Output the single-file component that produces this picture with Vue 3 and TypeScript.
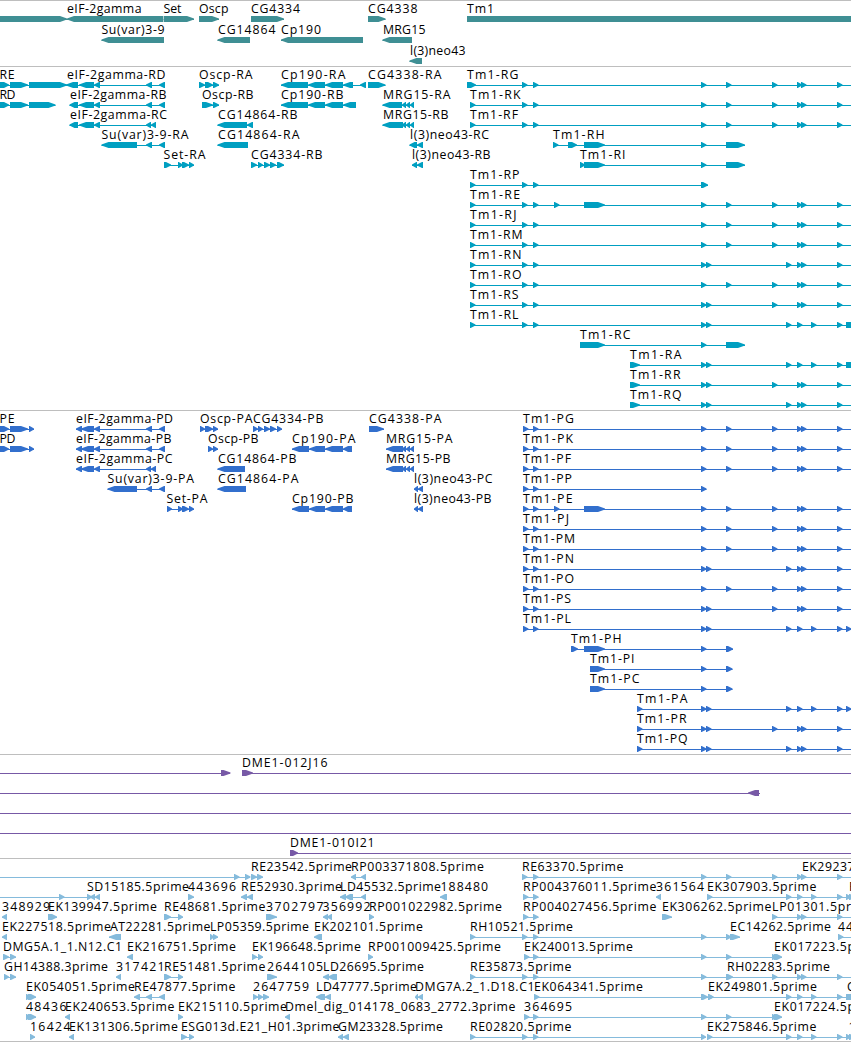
<script setup lang="ts">
interface Label { text: string; x: number; width?: number }
interface Feature { line: [number, number]; shapes: string[] }
interface Row { labels: Label[]; features: Feature[] }
interface Track { kind: string; rowHeight: number; rows: Row[] }

const EDGE = 860

// Exon groups shared by the Tm1 isoforms. A bare number is a minimal-width exon.
const A = '701 726 772 797-802 801 837'
const B = '701 706 786 797-802 801 837'
const C = '701 706 772 797-802 801 837'
const D = '701 706 786 797 811 837'

function arrow(a: number, b: number, forward: boolean): string {
  const w = b - a
  const tip = w > 9 ? 7 : Math.max(0, Math.min(5, w - 0.7))
  return forward
    ? `${a},0 ${b - tip},0 ${b},2.6 ${b},3.4 ${b - tip},6 ${a},6`
    : `${b},0 ${a + tip},0 ${a},2.6 ${a},3.4 ${a + tip},6 ${b},6`
}

// Feature syntax: direction, exon ranges, optional "from~to" for the intron line.
function feature(src: string): Feature {
  const forward = src[0] === '>'
  let line: [number, number] | null = null
  const spans: [number, number][] = []
  for (const part of src.slice(1).trim().split(/\s+/)) {
    if (part.includes('~')) {
      const [a, b] = part.split('~').map(Number)
      line = [a, b]
    } else if (part.includes('-')) {
      const [a, b] = part.split('-').map(Number)
      spans.push([a, b])
    } else {
      spans.push([Number(part), Number(part) + 5.5])
    }
  }
  return {
    line: line ?? [spans[0][0], spans[spans.length - 1][1]],
    shapes: spans.map(([a, b]) => arrow(a, b, forward)),
  }
}

function label(src: string): Label {
  const [text, pos] = src.split('@')
  const [x, end] = pos.split(',').map(Number)
  return { text, x, width: end === undefined ? undefined : end - x }
}

function row(labels: string, features: string): Row {
  return {
    labels: labels ? labels.split(' ').map(label) : [],
    features: features.split(';').map((s) => feature(s.trim())),
  }
}

const cont = `0~${EDGE}`
const tm = (name: string, x: number, end: number, exons: string, open = true): [string, string] => [
  `Tm1-${name}@${x},${end}`,
  `> ${exons}${open ? ` ${x}~${EDGE}` : ''}`,
]
const add = (labels: string, features: string, t: [string, string]): Row =>
  row(labels ? `${labels} ${t[0]}` : t[0], features ? `${features}; ${t[1]}` : t[1])

const R = '470 522 533'
const P = '523 533'

const tracks: Track[] = [
  {
    kind: 'gene',
    rowHeight: 21,
    rows: [
      row('eIF-2gamma@67,141.5 Set@163.5,181.5 Oscp@199,228.5 CG4334@251,300 CG4338@368,417.5 Tm1@467,494',
        `> 0-67; < 67-163.4; > 164-194; > 199-219; > 251-284; > 368-385.5; > 467-${EDGE + 10}`),
      row('Su(var)3-9@101.5,164.5 CG14864@218,275.5 Cp190@281,321 MRG15@383,425.5',
        '< 101.5-164; < 217.5-250; < 281-363; < 382.5-412'),
      row('l(3)neo43@410,465.5', '< 409.5-422'),
    ],
  },
  {
    kind: 'transcript',
    rowHeight: 20,
    rows: [
      add('RE@-0.5,14.5 eIF-2gamma-RD@67,165.5 Oscp-RA@199,252.5 Cp190-RA@281,345.5 CG4338-RA@368,441.5',
        '> 0-9 10-28 29-67; < 66-78 79-94 94-100 146-152 159-165; > 199-205 205-213 213-219; < 281-308 308-325 325-343 343-353 360-366; > 368-385.5',
        tm('RG', 467, 518.5, `467-476 522 533 ${A}`)),
      add('RD@-0.5,15.5 eIF-2gamma-RB@70,166.5 Oscp-RB@202,253.5 Cp190-RB@281,343.5 MRG15-RA@383,450.5',
        '> 0-9 10-28 29-55.5; < 69.5-78 79-94 94-100 146-152 159-165; > 202-213 213-219; < 281-308 308-325 325-343 343-356; < 382.5-402 402-406 406-410 410-414',
        tm('RK', 470, 520.5, `${R} ${A}`)),
      add('eIF-2gamma-RC@70,167 CG14864-RB@218,297.5 MRG15-RB@383,448.5',
        '< 69.5-78 79-94 94-100 146-151 151-156; < 217.5-247 247-253; < 382.5-403 402-406 406-410 410-414',
        tm('RF', 470, 518, `${R} ${A}`)),
      add('Su(var)3-9-RA@101.5,188.5 CG14864-RA@218,299.5 l(3)neo43-RC@410,489',
        '< 101.5-137 146-152 159-165; < 217.5-248; < 409.5-417 417-423',
        tm('RH', 553, 604.5, '553 568-577 584-605 701 726-745', false)),
      add('Set-RA@163.5,205.5 CG4334-RB@251,322.5 l(3)neo43-RB@412,490.5',
        '> 164-171 178-183 182-189 189-194; > 251-257 258-263 264-270 270-276 277-284; < 412-417 417-423',
        tm('RI', 580, 625.5, '580-585 584-605 701 726-745', false)),
      add('', '', tm('RP', 470, 519.5, `${R} 701-708`, false)),
      add('', '', tm('RE', 470, 520, `${R} 554 584-605 ${A}`)),
      add('', '', tm('RJ', 470, 516.5, `${R} ${A}`)),
      add('', '', tm('RM', 470, 522.5, `${R} ${A}`)),
      add('', '', tm('RN', 470, 521.5, `${R} ${B}`)),
      add('', '', tm('RO', 470, 521.5, `${R} ${A}`)),
      add('', '', tm('RS', 470, 518.5, `${R} ${C}`)),
      add('', '', tm('RL', 470, 518.5, `${R} ${D} 846-860`)),
      add('', '', tm('RC', 580, 630.5, '580-605 701 726-745', false)),
      add('', '', tm('RA', 630, 681.5, `630-640 ${D} 846-860`)),
      add('', '', tm('RR', 630, 680.5, `630-640 ${C}`)),
      add('', '', tm('RQ', 630, 681.5, `630-640 ${B}`)),
    ],
  },
  {
    kind: 'protein',
    rowHeight: 20,
    rows: [
      add('PE@-0.5,14.5 eIF-2gamma-PD@76,173 Oscp-PA@200,252.5 CG4334-PB@253,323.5 CG4338-PA@369,441.5',
        '> 0-9 10-28 29-34; < 76-82 81-94 94-100 146-152 159-165; > 200-205 205-213 213-218; > 253-258 258-263 264-270 270-276 277-282; > 369-384',
        tm('PG', 523, 574, `${P} ${A}`)),
      add('PD@-0.5,15.5 eIF-2gamma-PB@76,171.5 Oscp-PB@208,258.5 Cp190-PA@292,355.5 MRG15-PA@386,452.5',
        '> 0-9 10-28 29-34; < 76-82 81-94 94-100 146-152 159-165; > 208-213 213-218; < 292-309 309-325 325-343 343-352; < 386-403 402-406 406-410 410-414',
        tm('PK', 523, 573, `${P} ${A}`)),
      add('eIF-2gamma-PC@76,172.5 CG14864-PB@218,296.5 MRG15-PB@386,450.5',
        '< 76-82 81-94 94-100 146-151 151-156; < 217.5-245; < 386-403 402-406 406-410 410-414',
        tm('PF', 523, 571, `${P} ${A}`)),
      add('Su(var)3-9-PA@107.5,194 CG14864-PA@218,298.5 l(3)neo43-PC@414,492.5',
        '< 107.5-137 146-152 159-165; < 217.5-246; < 414-418 418-423',
        tm('PP', 523, 572, `${P} 701`, false)),
      add('Set-PA@166.5,207.5 Cp190-PB@292,353.5 l(3)neo43-PB@414,491.5',
        '> 167-172 178-183 182-189 189-194; < 292-309 309-325 325-343 343-352; < 414-418 418-423',
        tm('PE', 523, 572.5, `${P} 554 584-605 ${A}`)),
      add('', '', tm('PJ', 523, 569, `${P} ${A}`)),
      add('', '', tm('PM', 523, 575, `${P} ${A}`)),
      add('', '', tm('PN', 523, 574, `${P} ${B}`)),
      add('', '', tm('PO', 523, 574, `${P} ${A}`)),
      add('', '', tm('PS', 523, 571, `${P} ${C}`)),
      add('', '', tm('PL', 523, 571, `${P} ${D} 846`)),
      add('', '', tm('PH', 571, 621.5, '571-578 584-605 701 726-733', false)),
      add('', '', tm('PI', 590, 634.5, '590-605 701 726-732.5', false)),
      add('', '', tm('PC', 590, 639.5, '590-605 701 726-732.5', false)),
      add('', '', tm('PA', 637, 687.5, `637 ${D} 846`)),
      add('', '', tm('PR', 637, 686.5, `637 ${C}`)),
      add('', '', tm('PQ', 637, 687.5, `637 ${B}`)),
    ],
  },
  {
    kind: 'bac',
    rowHeight: 20,
    rows: [
      row('DME1-012J16@242,327.5', `> 221-230.5 0~230; > 242-253 242~${EDGE}`),
      row('', '< 748-759 0~760'),
      row('', `> 860-860 ${cont}`),
      row('', `> 860-860 ${cont}`),
      row('DME1-010I21@290,374.5', `> 290-298 290~${EDGE}`),
    ],
  },
  {
    kind: 'est',
    rowHeight: 20,
    rows: [
      row('RE23542.5prime@251,352 RP003371808.5prime@351,484 RE63370.5prime@522,623.5 EK29237@802,854.5',
        `> 234 245 0~250; > 251-257 257-263; < 351-356 361-366; > 522 533 ${A} 522~${EDGE}`),
      row('SD15185.5prime@87,189 443696@188,236 RE52930.3prime@241,342 LD45532.5prime@340,441 188480@440.5,488 RP004376011.5prime@523,656.5 361564@656,704 EK307903.5prime@707,816.5 R@849',
        `> 59 87-92 0~92; < 90-95 95-100; > 188-194; < 241-247 247-253; < 340-346 345-353 361-366; < 440-447; > 523 533; < 656-661; > 707 786 797 811 837 846-851 849-855 707~${EDGE}`),
      row('348929@2,50 EK139947.5prime@48,157 RE48681.5prime@164,265.5 3702797@266,323.5 356992@322.5,370.5 RP001022982.5prime@369,502 RP004027456.5prime@523,656.5 EK306262.5prime@662,771.5 LP01301.5pr@772,851',
        `< 2-7; > 48-57; > 164-171 178-183; > 266-277; < 323-328 327-332; > 369-374; > 523 533; > 662-672; > 772 797-802 801 837 772~${EDGE}`),
      row('EK227518.5prime@2,111 AT22281.5prime@110,210.5 LP05359.5prime@210,309 EK202101.5prime@314,423 RH10521.5prime@470,573 EC14262.5prime@730,831 44@838,853',
        `< 2-7; < 109-121; > 210-214 213-218; < 314-322; > 470 522 533 701 726 730-740; > 838 838~${EDGE}`),
      row('DMG5A.1_1.N12.C1@3,122 EK216751.5prime@127,236 EK196648.5prime@252,361 RP001009425.5prime@368,501 EK240013.5prime@524,633 EK017223.5p@774,855',
        '> 3-9 10-16; < 127-133; > 252-257 258-263; > 368-373; > 524 533 701 726 772-777 774-782'),
      row('GH14388.3prime@4,108 317421@116,164.5 RE51481.5prime@164,265.5 2644105@267,323 LD26695.5prime@323,424 RE35873.5prime@470,571.5 RH02283.5prime@727,830',
        `> 4-9 10-16; < 116-121; > 164-171 178-183; > 267-277; < 323-329 328-337; > 470 522 533 701 726-733 772 797-802 801 837 470~${EDGE}`),
      row('EK054051.5prime@26,135 RE47877.5prime@134,235.5 2647759@253,309 LD47777.5prime@316,417 DMG7A.2_1.D18.C1@415,534.5 EK064341.5prime@534,643 EK249801.5prime@708,817 C@847',
        `> 26-31 28-36; < 134-140 146-152 159-165; > 253-258 258-263 263-269; < 316-325 325-331; < 415-418 418-423; > 534 701-708 708 534~713; > 708 786 797 811 837 846-860 708~${EDGE}`),
      row('48436@26,66.5 EK240653.5prime@65,174.5 EK215110.5prime@178,287 Dmel_dig_014178_0683_2772.3prime@285,515.5 364695@524,572 EK017224.5p@774,855',
        '> 26-31 28-36; < 65-70; > 178-183; < 285-290; > 524 533 701 726 772-777 774-782'),
      row('16424@30,70.5 EK131306.5prime@69,178 ESG013d.E21_H01.3prime@181,339.5 GM23328.5prime@338,443 RE02820.5prime@470,571.5 EK275846.5prime@707,816.5 1@848.5',
        `> 30-35; < 69-74; > 181-187 189-194; < 338-343 343-349; > 470 522 533 701-706; > 707 786 797 811 837 846-851 849-855 707~${EDGE}`),
    ],
  },
]
</script>

<template>
  <main class="browser">
    <section v-for="track in tracks" :key="track.kind" class="track" :class="track.kind">
      <svg
        v-for="(r, i) in track.rows"
        :key="i"
        class="row"
        width="851"
        :height="track.rowHeight"
      >
        <g v-for="(f, j) in r.features" :key="j" class="feature">
          <rect :x="f.line[0]" y="18" :width="f.line[1] - f.line[0]" height="1" />
          <polygon v-for="(p, k) in f.shapes" :key="k" :points="p" transform="translate(0 15)" />
        </g>
        <text
          v-for="l in r.labels"
          :key="l.text"
          :x="l.x"
          y="12"
          :textLength="l.width"
          lengthAdjust="spacing"
        >{{ l.text }}</text>
      </svg>
    </section>
  </main>
</template>

<style>
html,
body {
  margin: 0;
  background: #fff;
  overflow: hidden;
}
</style>

<style scoped>
.browser {
  box-sizing: border-box;
  width: 851px;
  height: 1042px;
  display: flex;
  flex-direction: column;
  overflow: hidden;
  background: #fff;
  border-bottom: 1px solid #bebebe;
}
.track {
  flex: none;
  display: flex;
  flex-direction: column;
  border-top: 1px solid #bebebe;
  padding-bottom: 3px;
}
.track.gene {
  padding-bottom: 2px;
}
.track.est {
  padding-bottom: 0;
}
.row {
  display: block;
  flex: none;
  overflow: visible;
}
.gene .feature {
  fill: #3f8f94;
}
.transcript .feature {
  fill: #009fc1;
}
.protein .feature {
  fill: #326fcd;
}
.bac .feature {
  fill: #7759a6;
}
.est .feature {
  fill: #85bbdc;
}
text {
  font-family: "Open Sans", "Noto Sans", "DejaVu Sans", sans-serif;
  font-size: 12.3px;
  fill: #000;
}
</style>
